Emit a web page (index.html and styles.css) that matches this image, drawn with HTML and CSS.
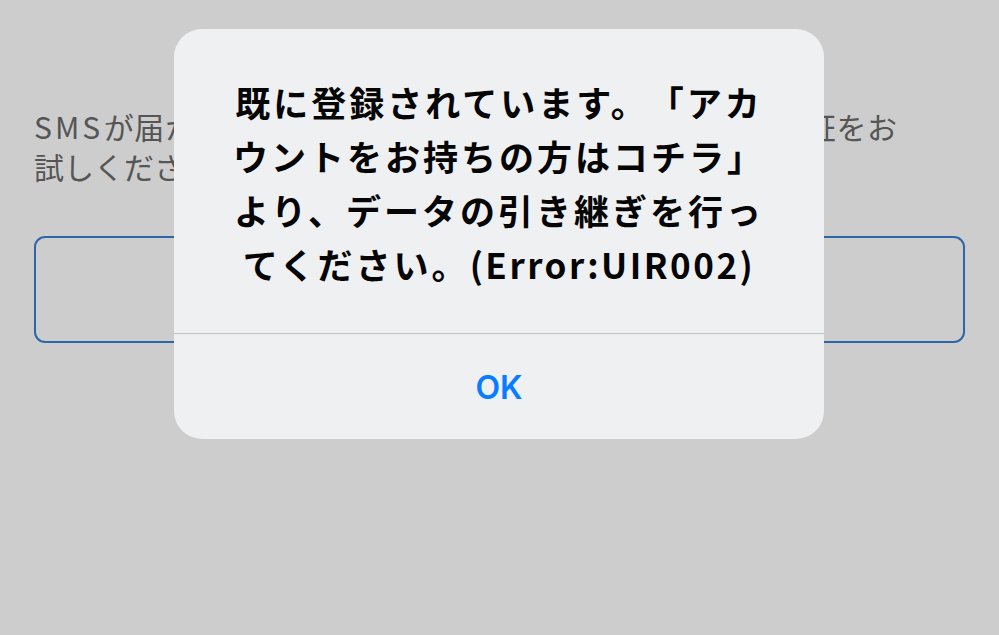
FILE: index.html
```html
<!DOCTYPE html>
<html lang="ja">
<head>
<meta charset="utf-8">
<title>Alert</title>
<link rel="stylesheet" href="styles.css">
</head>
<body>
<main class="screen">
  <p class="notice">
    <span class="notice-line notice-line-first"><span class="latin">SMS</span>が届かない場合は、しばらく待ってから再度音声認証をお</span>
    <span class="notice-line">試しください。</span>
  </p>
  <div class="input-box"></div>
</main>

<div class="alert" role="alertdialog">
  <div class="alert-body">
    <p class="alert-title">
      <span class="title-line">既に登録されています。「アカ</span>
      <span class="title-line">ウントをお持ちの方はコチラ」</span>
      <span class="title-line">より、データの引き継ぎを行っ</span>
      <span class="title-line">てください。<span class="title-latin">(Error:UIR002)</span></span>
    </p>
  </div>
  <div class="alert-actions">
    <button class="alert-button" type="button">OK</button>
  </div>
</div>
</body>
</html>
```

FILE: styles.css
```css
html, body {
  margin: 0;
  padding: 0;
}

body {
  width: 999px;
  height: 635px;
  background: #cdcdcd;
  overflow: hidden;
  position: relative;
  font-family: "Noto Sans CJK JP", "Noto Sans", sans-serif;
}

.screen {
  padding: 106px 34px 0 34px;
  display: flex;
  flex-direction: column;
}

.notice {
  margin: 0;
  width: 863px;
  font-size: 30px;
  line-height: 40px;
  color: #555555;
}

.notice-line {
  display: block;
  white-space: nowrap;
}

.notice-line-first {
  text-align: justify;
  text-align-last: justify;
}

.latin {
  letter-spacing: 3px;
}

.input-box {
  margin-top: 50px;
  width: 927px;
  height: 103px;
  border: 2px solid #2d66aa;
  border-radius: 11px;
}

.alert {
  position: absolute;
  top: 29px;
  left: 174px;
  width: 650px;
  height: 410px;
  background: #eff0f2;
  border-radius: 28px;
  display: flex;
  flex-direction: column;
  overflow: hidden;
}

.alert-body {
  height: 304px;
  box-sizing: border-box;
  padding-top: 46px;
  display: flex;
  justify-content: center;
}

.alert-title {
  margin: 0;
  font-size: 35px;
  font-weight: 700;
  line-height: 54px;
  letter-spacing: 3px;
  color: #050505;
  text-align: center;
  text-spacing-trim: space-all;
}

.title-line {
  display: block;
  white-space: nowrap;
}

.title-latin {
  letter-spacing: 2.5px;
}

.alert-actions {
  flex: 1;
  border-top: 1px solid #c3c4c7;
  display: flex;
  align-items: center;
  justify-content: center;
}

.alert-button {
  border: 0;
  background: transparent;
  padding: 0;
  font-family: "Inter", "Noto Sans", sans-serif;
  font-size: 32px;
  font-weight: 600;
  color: #0a7cff;
  margin-top: 2px;
}
```
